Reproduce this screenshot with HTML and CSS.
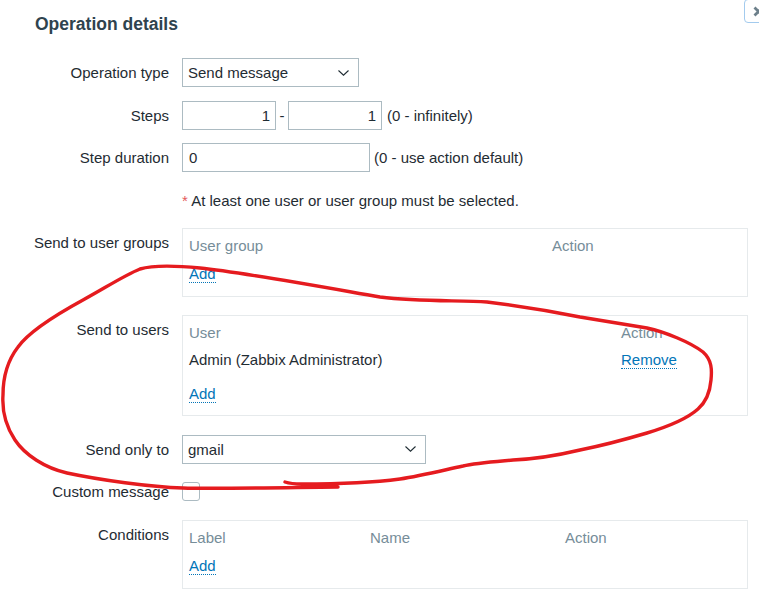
FILE: index.html
```html
<!DOCTYPE html>
<html lang="en">

<head>
    <meta charset="UTF-8">
    <title>Operation details</title>
    <link rel="stylesheet" href="styles.css">
</head>

<body>
    <div class="dialog">
        <button class="btn-close" title="Close">
            <svg width="11" height="11" viewBox="0 0 11 11">
                <path d="M1.5 1.5 L9.5 9.5 M9.5 1.5 L1.5 9.5" stroke="#6d808b" stroke-width="2.8" />
            </svg>
        </button>

        <h2 class="dialog-title">Operation details</h2>

        <div class="form">
            <div class="form-row">
                <label class="form-label">Operation type</label>
                <div class="form-field">
                    <div class="select select-type">
                        <span>Send message</span>
                        <svg class="chevron" width="11" height="6" viewBox="0 0 11 6">
                            <polyline points="0.5,0.5 5.5,5.2 10.5,0.5" fill="none" stroke="#1f2c33" stroke-width="1.1" />
                        </svg>
                    </div>
                </div>
            </div>

            <div class="form-row">
                <label class="form-label">Steps</label>
                <div class="form-field">
                    <input class="input input-num" type="text" value="1">
                    <span class="dash">-</span>
                    <input class="input input-num" type="text" value="1">
                    <span class="hint">(0 - infinitely)</span>
                </div>
            </div>

            <div class="form-row">
                <label class="form-label">Step duration</label>
                <div class="form-field">
                    <input class="input input-duration" type="text" value="0">
                    <span class="hint">(0 - use action default)</span>
                </div>
            </div>

            <div class="form-row">
                <span></span>
                <div class="note"><span class="req">*</span> At least one user or user group must be selected.</div>
            </div>

            <div class="form-row">
                <label class="form-label">Send to user groups</label>
                <div class="list-box">
                    <div class="list-head cols-groups">
                        <span>User group</span>
                        <span>Action</span>
                    </div>
                    <div class="list-foot"><a class="link" href="#">Add</a></div>
                </div>
            </div>

            <div class="form-row spaced tight">
                <label class="form-label">Send to users</label>
                <div class="list-box list-box-filled">
                    <div class="list-head cols-users">
                        <span>User</span>
                        <span>Action</span>
                    </div>
                    <div class="list-row cols-users">
                        <span>Admin (Zabbix Administrator)</span>
                        <span><a class="link" href="#">Remove</a></span>
                    </div>
                    <div class="list-foot"><a class="link" href="#">Add</a></div>
                </div>
            </div>

            <div class="form-row spaced">
                <label class="form-label">Send only to</label>
                <div class="form-field">
                    <div class="select select-media">
                        <span>gmail</span>
                        <svg class="chevron" width="11" height="6" viewBox="0 0 11 6">
                            <polyline points="0.5,0.5 5.5,5.2 10.5,0.5" fill="none" stroke="#1f2c33" stroke-width="1.1" />
                        </svg>
                    </div>
                </div>
            </div>

            <div class="form-row spaced compact">
                <label class="form-label">Custom message</label>
                <div class="form-field">
                    <span class="checkbox"></span>
                </div>
            </div>

            <div class="form-row spaced">
                <label class="form-label">Conditions</label>
                <div class="list-box">
                    <div class="list-head cols-conditions">
                        <span>Label</span>
                        <span>Name</span>
                        <span>Action</span>
                    </div>
                    <div class="list-foot"><a class="link" href="#">Add</a></div>
                </div>
            </div>
        </div>

        <!-- hand-drawn marker loop round the users block -->
        <svg class="marker" width="759" height="597" viewBox="0 0 759 597">
            <path d="M338,487 C260,488 210,489 183,488 C150,487 100,480 67,473 C45,468 25,455 15,440
                     C5,425 2,410 3,395 C3,375 8,360 18,347 C28,333 50,318 83,300 C105,288 125,275 140,269
                     C150,266 170,265 200,268 C240,272 300,283 380,297 C420,302 460,300 487,302
                     C520,306 550,311 580,317 C610,322 630,325 647,328 C665,332 690,342 703,352
                     C712,360 712,370 711,380 C710,392 706,402 698,409 C688,418 670,426 647,433
                     C620,441 600,446 580,450 C555,456 535,459 513,460 C490,462 475,463 463,466
                     C440,471 420,476 400,479 C370,483 340,484 302,484 C295,484 288,483 285,482"
                fill="none" stroke="#e51b1f" stroke-width="3.4" stroke-linecap="round" stroke-linejoin="round" />
        </svg>
    </div>
</body>

</html>
```

FILE: styles.css
```css
body {
    margin: 0;
    font-family: "Liberation Sans", Arial, sans-serif;
    font-size: 15px;
    color: #1f2c33;
    background: #fff;
    overflow: hidden;
}

.dialog {
    position: relative;
    box-sizing: border-box;
    width: 759px;
    height: 597px;
    padding-top: 14px;
}

.dialog-title {
    margin: 0 0 24px 35px;
    font-size: 17.5px;
    line-height: 20px;
    font-weight: bold;
    color: #2f434e;
}

/* Close button sits in the dialog corner */
.btn-close {
    position: absolute;
    top: -1px;
    left: 744px;
    width: 28px;
    height: 24px;
    padding: 0;
    border: 1.5px solid #a3cbee;
    border-radius: 4px;
    background: #fff;
    display: flex;
    align-items: center;
    justify-content: center;
}

/* Form layout */
.form {
    display: flex;
    flex-direction: column;
    gap: 13.5px;
}

.form-row {
    display: grid;
    grid-template-columns: 169px 566px;
    column-gap: 13px;
}

.form-row.spaced {
    margin-top: 5px;
}

.form-row.spaced.tight {
    margin-top: 4.5px;
}

.form-label {
    text-align: right;
    line-height: 29px;
}

.form-row.compact .form-label {
    line-height: 19px;
}

.form-field {
    display: flex;
    align-items: center;
}

.input {
    box-sizing: border-box;
    height: 29px;
    margin: 0;
    padding: 0 6px;
    border: 1px solid #acbbc2;
    border-radius: 0;
    font: inherit;
    color: inherit;
    background: #fff;
}

.input-num {
    width: 94px;
    text-align: right;
    padding-right: 5px;
}

.input-duration {
    width: 188px;
}

.dash {
    width: 12px;
    text-align: center;
}

.hint {
    margin-left: 5px;
}

.input-duration+.hint {
    margin-left: 4px;
}

.select {
    box-sizing: border-box;
    height: 29px;
    padding: 0 9px 0 5px;
    border: 1px solid #acbbc2;
    display: flex;
    align-items: center;
    justify-content: space-between;
}

.select-type {
    width: 177px;
}

.select-media {
    width: 244px;
}

.note {
    line-height: 29px;
}

.req {
    color: #e45959;
}

.checkbox {
    box-sizing: border-box;
    width: 18px;
    height: 19px;
    border: 1px solid #acbbc2;
    border-radius: 3px;
}

/* Table-like boxes */
.list-box {
    box-sizing: border-box;
    border: 1px solid #e6eaec;
    padding: 3px 6px 8px;
}

.list-box-filled {
    padding-bottom: 7px;
}

.list-head,
.list-row {
    display: grid;
}

.list-head {
    line-height: 28px;
    color: #768d99;
}

.list-row {
    line-height: 26px;
}

.list-foot {
    line-height: 28px;
}

.list-row+.list-foot {
    margin-top: 7px;
}

.cols-groups {
    grid-template-columns: 363px 1fr;
}

.cols-users {
    grid-template-columns: 432px 1fr;
}

.cols-conditions {
    grid-template-columns: 181px 195px 1fr;
}

.link {
    color: #0275b8;
    text-decoration: none;
    border-bottom: 1px dotted #0275b8;
}

.marker {
    position: absolute;
    top: 0;
    left: 0;
    pointer-events: none;
}
```
